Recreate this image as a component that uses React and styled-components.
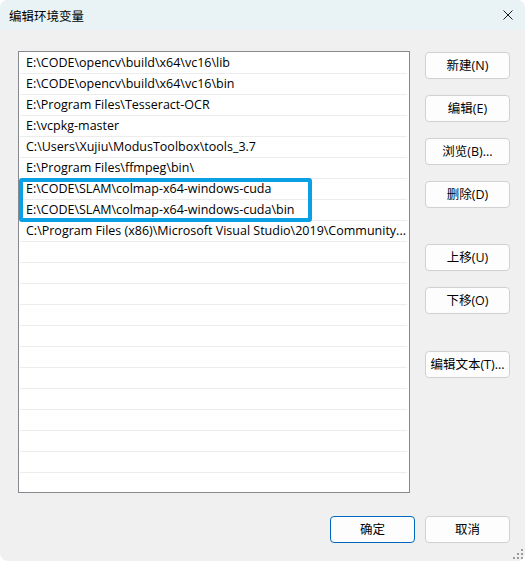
import React from "react";
import styled, { createGlobalStyle } from "styled-components";

const Global = createGlobalStyle`
  html, body { margin: 0; padding: 0; background: #ffffff; }
  body {
    font-family: "Open Sans", "Noto Sans CJK SC", sans-serif;
    -webkit-font-smoothing: antialiased;
  }
  * { box-sizing: border-box; }
`;

const Window = styled.div`
  position: relative;
  width: 525px;
  height: 561px;
  background: #f0f0f0;
  border-radius: 8px;
  overflow: hidden;
  display: flex;
  flex-direction: column;
`;

const TitleBar = styled.div`
  height: 30px;
  flex: none;
  background: #e9f3f6;
  display: flex;
  align-items: center;
  justify-content: space-between;
  padding: 0 12px 0 9px;
`;

const Title = styled.span`
  font-family: "Noto Sans CJK SC", sans-serif;
  font-size: 12.5px;
  color: #000;
`;

const Body = styled.div`
  display: grid;
  grid-template-columns: 392px 85px;
  grid-template-rows: 442px auto;
  column-gap: 15px;
  padding: 21px 15px 0 18px;
`;

const List = styled.div`
  position: relative;
  height: 442px;
  border: 1px solid #868a8e;
  background: #ffffff;
  padding: 1px 2px 1px 1px;
  overflow: hidden;
`;

const Row = styled.div`
  height: 21px;
  line-height: 20px;
  border-bottom: 1px solid ${(p) => (p.$last ? "transparent" : "#ececec")};
  padding: 0 0 0 6px;
  font-size: 12.5px;
  color: #000;
  white-space: nowrap;
`;

const Highlight = styled.div`
  position: absolute;
  left: 0;
  top: 126px;
  width: 293px;
  height: 44px;
  border: 4px solid #0aa0e4;
  border-radius: 3px;
  pointer-events: none;
`;

const ButtonColumn = styled.div`
  display: flex;
  flex-direction: column;
`;

const Button = styled.button`
  width: 85px;
  height: 27px;
  margin-top: ${(p) => p.$top || 0}px;
  padding: 0;
  border: 1px solid ${(p) => (p.$primary ? "#0067c0" : "#d1d1d1")};
  border-radius: 4px;
  background: #fdfdfd;
  color: #000;
  font-family: "Open Sans", "Noto Sans CJK SC", sans-serif;
  font-size: 12.5px;
  line-height: 25px;
  text-align: center;
  white-space: nowrap;
  cursor: default;
`;

const Footer = styled.div`
  grid-column: 1 / span 2;
  display: flex;
  justify-content: flex-end;
  gap: 10px;
  margin-top: 23px;
`;

const Grip = styled.svg`
  position: absolute;
  right: 1px;
  bottom: 1px;
`;

const paths = [
  "E:\\CODE\\opencv\\build\\x64\\vc16\\lib",
  "E:\\CODE\\opencv\\build\\x64\\vc16\\bin",
  "E:\\Program Files\\Tesseract-OCR",
  "E:\\vcpkg-master",
  "C:\\Users\\Xujiu\\ModusToolbox\\tools_3.7",
  "E:\\Program Files\\ffmpeg\\bin\\",
  "E:\\CODE\\SLAM\\colmap-x64-windows-cuda",
  "E:\\CODE\\SLAM\\colmap-x64-windows-cuda\\bin",
  "C:\\Program Files (x86)\\Microsoft Visual Studio\\2019\\Community...",
];

const TOTAL_ROWS = 21;

export default function App() {
  const rows = [];
  for (let i = 0; i < TOTAL_ROWS; i++) rows.push(paths[i] || "");
  return (
    <>
      <Global />
      <Window>
        <TitleBar>
          <Title>编辑环境变量</Title>
          <svg width="10" height="10" viewBox="0 0 10 10">
            <path d="M0.5 0.5 L9.5 9.5 M9.5 0.5 L0.5 9.5" stroke="#1a1a1a" strokeWidth="1" fill="none" />
          </svg>
        </TitleBar>
        <Body>
          <List>
            {rows.map((r, i) => (
              <Row key={i} $last={i === TOTAL_ROWS - 1}>
                {r || "\u00a0"}
              </Row>
            ))}
            <Highlight />
          </List>
          <ButtonColumn>
            <Button $top={1}>新建(N)</Button>
            <Button $top={16}>编辑(E)</Button>
            <Button $top={16}>浏览(B)...</Button>
            <Button $top={16}>删除(D)</Button>
            <Button $top={36}>上移(U)</Button>
            <Button $top={16}>下移(O)</Button>
            <Button $top={37}>编辑文本(T)...</Button>
          </ButtonColumn>
          <Footer>
            <Button $primary>确定</Button>
            <Button>取消</Button>
          </Footer>
        </Body>
        <Grip width="11" height="11" viewBox="0 0 11 11">
          <g fill="#9a9a9a">
            <rect x="8" y="0" width="2" height="2" />
            <rect x="4" y="4" width="2" height="2" />
            <rect x="8" y="4" width="2" height="2" />
            <rect x="0" y="8" width="2" height="2" />
            <rect x="4" y="8" width="2" height="2" />
            <rect x="8" y="8" width="2" height="2" />
          </g>
        </Grip>
      </Window>
    </>
  );
}
